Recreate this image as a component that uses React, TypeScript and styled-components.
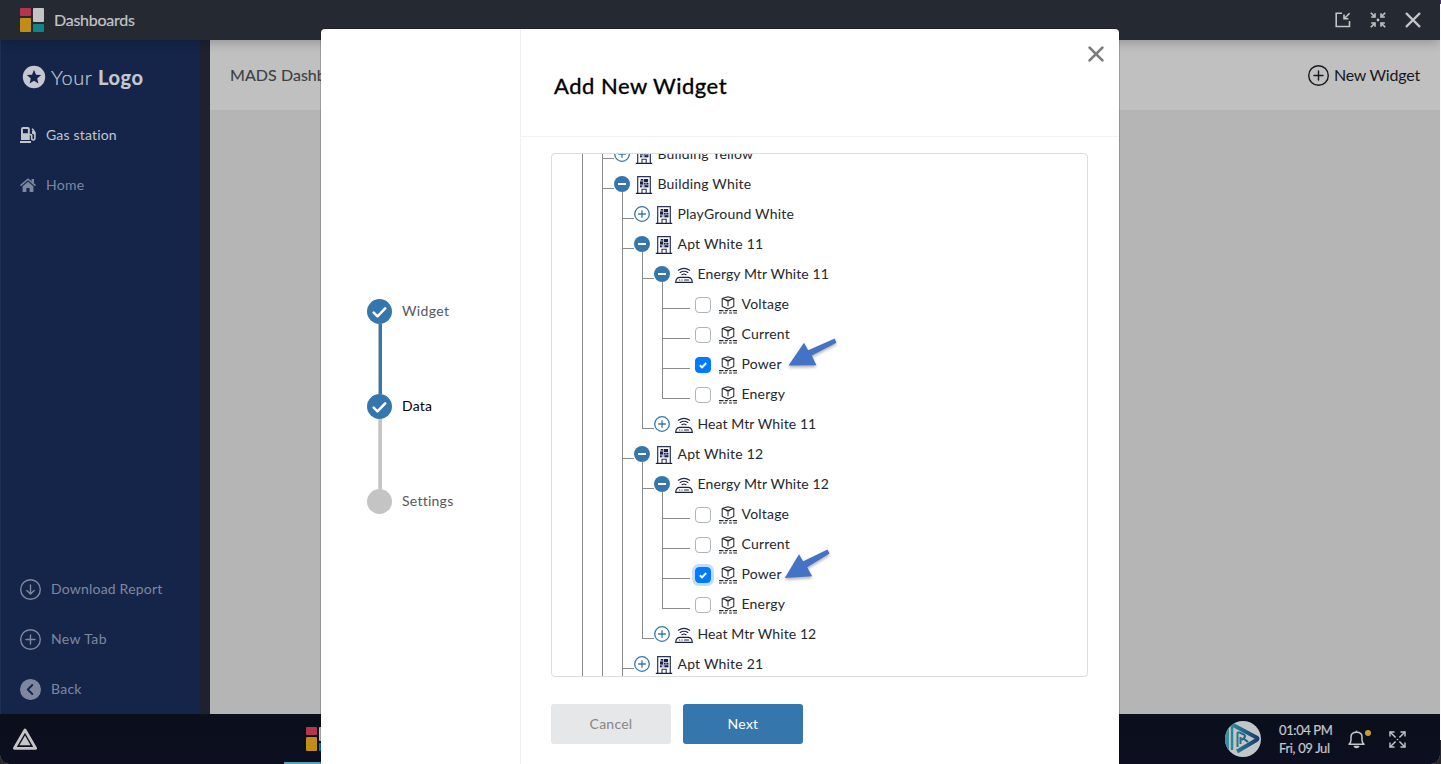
import React from "react";
import styled, { createGlobalStyle, css } from "styled-components";

const BLUE = "#3577ac";

const Global = createGlobalStyle`
  * { box-sizing: border-box; }
  html, body { margin: 0; padding: 0; background: #fdfdfd; overflow: hidden; }
  body { font-family: Lato, "Liberation Sans", sans-serif; font-size: 14px; }
  svg { display: block; flex: none; }
`;

const Label = styled.span<{ $ls?: number }>`
  display: block;
  padding-bottom: 2px;
  letter-spacing: ${(p) => p.$ls ?? 0.25}px;
  white-space: nowrap;
`;

/* ---------- desktop shell ---------- */

const Screen = styled.div`
  position: relative;
  width: 1441px;
  height: 764px;
  overflow: hidden;
  padding-right: 1px;
  background: linear-gradient(#5b2a86 4px, #fbfbfb 4px, #fbfbfb 740px, #2a2724 740px);
`;

const Desktop = styled.div`
  display: flex;
  flex-direction: column;
  height: 764px;
  border-radius: 0 0 9px 9px;
  overflow: hidden;
  background: #b5b5b5;
`;

const TopBar = styled.header`
  position: relative;
  display: flex;
  align-items: center;
  height: 40px;
  flex: none;
  padding: 0 19px 0 20px;
  background: #252932;
  color: #c3c4c6;
  font-size: 16px;
  box-shadow: 0 3px 10px rgba(0, 0, 0, 0.22);
  z-index: 1;
  svg + span { margin-left: 10px; }
`;

const AppName = styled(Label)`
  -webkit-text-stroke: 0.2px currentColor;
`;

const WindowControls = styled.div`
  display: flex;
  align-items: center;
  gap: 19px;
  margin-left: auto;
`;

const Main = styled.div`
  display: flex;
  flex: 1;
  min-height: 0;
`;

const Sidebar = styled.nav`
  display: flex;
  flex-direction: column;
  width: 210px;
  padding: 12px 0 0 20px;
  background: #15254a;
  border-right: 10px solid #1e2230;
  box-shadow: inset 1px 0 0 #1f2f54;
`;

const Brand = styled.div`
  display: flex;
  align-items: center;
  height: 50px;
  padding-left: 2px;
  color: #c5c8d0;
  font-size: 20px;
  font-weight: 300;
  b { font-weight: 700; }
`;

const BrandText = styled.span`
  margin-left: 5px;
  letter-spacing: 0.6px;
  white-space: nowrap;
  -webkit-text-stroke: 0.2px currentColor;
`;

const NavItem = styled.a<{ $active?: boolean }>`
  display: flex;
  align-items: center;
  height: 50px;
  gap: 10px;
  color: ${(p) => (p.$active ? "#c3c6cb" : "#7f879f")};
`;

const NavSpacer = styled.div`
  flex: 1;
`;

const NavTop = styled.div`
  margin-top: 8px;
`;

const Content = styled.section`
  flex: 1;
`;

const PageHeader = styled.div`
  display: flex;
  justify-content: space-between;
  align-items: center;
  height: 70px;
  padding: 0 20px;
  background: #c0c0c0;
  font-size: 16px;
  color: #3c4046;
`;

const PageTitle = styled(Label)`
  -webkit-text-stroke: 0.15px currentColor;
`;

const NewWidget = styled.div`
  display: flex;
  align-items: center;
  gap: 5px;
  color: #16181d;
`;

const TaskBar = styled.footer`
  display: flex;
  align-items: center;
  height: 50px;
  flex: none;
  padding: 0 34px 0 13px;
  background: linear-gradient(180deg, #0a0f1b, #0d0f20);
  color: #c6c7cb;
`;

const RunningApp = styled.div`
  display: flex;
  align-items: center;
  justify-content: center;
  width: 68px;
  height: 50px;
  margin-left: 247px;
  border-bottom: 2px solid #5b9dbd;
  padding-top: 2px;
`;

const Tray = styled.div`
  display: flex;
  align-items: center;
  margin-left: auto;
`;

const Clock = styled.div`
  display: flex;
  flex-direction: column;
  width: 69px;
  margin-left: 18px;
  padding-top: 2px;
  font-size: 13px;
  line-height: 16px;
  -webkit-text-stroke: 0.2px currentColor;
`;

const Bell = styled.div`
  position: relative;
  margin-right: 24px;
`;

const BellDot = styled.i`
  position: absolute;
  top: 0;
  right: -6px;
  width: 6px;
  height: 6px;
  border-radius: 50%;
  background: #cc9c2c;
`;

/* ---------- dialog ---------- */

const Dialog = styled.div`
  position: absolute;
  left: 321px;
  top: 29px;
  display: flex;
  width: 798px;
  height: 740px;
  border-radius: 4px;
  background: #fff;
  box-shadow: 0 0 0 1px rgba(0, 0, 0, 0.18);
  z-index: 2;
`;

const StepPanel = styled.aside`
  display: flex;
  flex-direction: column;
  width: 200px;
  padding: 270px 0 0 46px;
  border-right: 1px solid #f1f1f1;
`;

const Step = styled.div<{ $current?: boolean }>`
  display: flex;
  align-items: center;
  gap: 10px;
  height: 25px;
  color: ${(p) => (p.$current ? "#000" : "#54575e")};
`;

const StepDot = styled.span<{ $done?: boolean }>`
  display: flex;
  align-items: center;
  justify-content: center;
  width: 25px;
  height: 25px;
  border-radius: 50%;
  background: ${(p) => (p.$done ? BLUE : "#c4c4c4")};
`;

const StepLine = styled.div<{ $done?: boolean }>`
  width: 4px;
  height: 70px;
  margin-left: 11px;
  background: ${(p) => (p.$done ? BLUE : "#c4c4c4")};
  border-left: 1px solid ${(p) => (p.$done ? "#a9bccb" : "#d3d3d3")};
`;

const DialogBody = styled.div`
  display: flex;
  flex-direction: column;
  flex: 1;
`;

const DialogHeader = styled.div`
  display: flex;
  justify-content: space-between;
  height: 108px;
  padding: 0 15px 0 33px;
  border-bottom: 1px solid #f1f1f1;
`;

const DialogTitle = styled.h2`
  margin: 42px 0 0;
  font-size: 22px;
  line-height: 30px;
  font-weight: 400;
  color: #000;
  letter-spacing: 0.5px;
  -webkit-text-stroke: 0.35px #000;
`;

const CloseButton = styled.div`
  padding-top: 16.5px;
`;

const TreeBox = styled.div`
  width: 537px;
  height: 524px;
  margin: 16px 0 0 30px;
  border: 1px solid #dcdcdc;
  border-radius: 4px;
  overflow: hidden;
`;

const Tree = styled.div`
  display: flex;
  flex-direction: column;
  margin-top: -15px;
  padding-left: 30px;
  color: #24282e;
`;

const Row = styled.div`
  display: flex;
  align-items: center;
  height: 30px;
  flex: none;
`;

const Guide = styled.span<{ $branch?: boolean; $leaf?: boolean; $last?: boolean }>`
  position: relative;
  align-self: flex-start;
  width: ${(p) => (p.$leaf ? 28 : p.$branch ? 12 : 20)}px;
  height: ${(p) => (p.$last ? 20 : 30)}px;
  border-left: 1px solid #8b8b8b;
  ${(p) =>
    p.$branch &&
    css`
      &::after {
        content: "";
        position: absolute;
        top: 19px;
        left: 0;
        right: 0;
        height: 1px;
        background: #8b8b8b;
      }
    `}
`;

const Toggle = styled.span<{ $open?: boolean }>`
  position: relative;
  width: 16px;
  height: 16px;
  ${(p) =>
    p.$open &&
    css`
      &::after {
        content: "";
        position: absolute;
        left: 8px;
        top: 16px;
        width: 1px;
        height: 7px;
        background: #8b8b8b;
      }
    `}
`;

const NodeIcon = styled.span<{ $leaf?: boolean }>`
  display: flex;
  width: 18px;
  margin: ${(p) => (p.$leaf ? "2px 4.5px 0 8px" : "2px 4.5px 0 5px")};
`;

const CheckBox = styled.span<{ $on?: boolean; $focus?: boolean }>`
  display: flex;
  align-items: center;
  justify-content: center;
  width: 16px;
  height: 16px;
  margin: 2px 0 0 5px;
  border-radius: 4px;
  border: 1px solid ${(p) => (p.$on ? "#007bff" : "#adb5bd")};
  background: ${(p) => (p.$on ? "#007bff" : "#fff")};
  box-shadow: ${(p) => (p.$focus ? "0 0 0 3px #c5dcfb" : "none")};
`;

const Actions = styled.div`
  display: flex;
  gap: 12px;
  margin: 27px 0 0 30px;
`;

const Button = styled.button<{ $primary?: boolean }>`
  width: 120px;
  height: 40px;
  border: 0;
  border-radius: 3px;
  font: inherit;
  color: ${(p) => (p.$primary ? "#fff" : "#868686")};
  background: ${(p) => (p.$primary ? BLUE : "#e6e7e9")};
`;

const Pointer = styled.svg<{ $top: number }>`
  position: absolute;
  left: 780px;
  top: ${(p) => p.$top}px;
  z-index: 3;
  filter: drop-shadow(0 2px 1.5px rgba(0, 0, 0, 0.3));
`;

/* ---------- drawings ---------- */

const TilesIcon = () => (
  <svg width="24" height="24">
    <rect width="11" height="8" rx="1" fill="#b5364c" />
    <rect y="10" width="11" height="14" rx="1" fill="#c08e18" />
    <rect x="13" width="11" height="14" rx="1" fill="#c4c4c4" />
    <rect x="13" y="16" width="11" height="8" rx="1" fill="#108488" />
  </svg>
);

const PopInIcon = () => (
  <svg width="16" height="16" fill="none" stroke="#c3c4c6" strokeWidth="1.6">
    <path d="M7 1.200H1.200v13.300h13.300V9" />
    <path d="M14.600 1.200L9.600 6.200M9 2.600v4.200h4.400" />
  </svg>
);

const ShrinkIcon = () => (
  <svg width="16" height="16" fill="none" stroke="#c3c4c6" strokeWidth="1.6">
    <path d="M.8 .8l3.800 3.800M15.200 .8l-3.800 3.800M.8 15.200l3.800-3.800M15.200 15.200l-3.800-3.800" />
    <path d="M5 1.200V5H1.200M11 1.200V5h3.800M5 14.800V11H1.200M11 14.800V11h3.800" />
    <circle cx="8" cy="8" r="1.4" fill="#c3c4c6" stroke="none" />
  </svg>
);

const CrossIcon = ({ size, color, width }: { size: number; color: string; width: number }) => (
  <svg width={size} height={size} viewBox="0 0 16 16" fill="none" stroke={color} strokeWidth={width} strokeLinecap="round">
    <path d="M1.600 1.600l12.800 12.800M14.400 1.600L1.600 14.400" />
  </svg>
);

const StarBadge = () => (
  <svg width="24" height="24" viewBox="0 0 24 24">
    <circle cx="12" cy="12" r="11.2" fill="#c5c8d0" />
    <path d="M12 4.8l2 4.9 5.2.4-4 3.4 1.2 5.1-4.4-2.8-4.4 2.8 1.2-5.1-4-3.4 5.2-.4z" fill="#15254a" />
  </svg>
);

const PumpIcon = () => (
  <svg width="16" height="16" viewBox="0 0 16 16">
    <path fillRule="evenodd" d="M1 13V2Q1 0 3 0h4.800Q9.800 0 9.800 2v11zM2.900 1.900v4.300h5V1.900z" fill="#c3c6cb" />
    <rect y="14" width="11" height="2" fill="#c3c6cb" />
    <path d="M9.800 7.600h.9q1 0 1 1v3q0 1.400 1.500 1.400t1.700-1.500V5.600L12.200 1.600" fill="none" stroke="#c3c6cb" strokeWidth="1.600" />
    <path d="M12 3.500l2.800 1.800v2.800L12 6.400z" fill="#c3c6cb" />
  </svg>
);

const HomeIcon = () => (
  <svg width="16" height="14" viewBox="0 0 16 14">
    <path d="M.5 7.600L8 1.200l7.500 6.400" fill="none" stroke="#7f879f" strokeWidth="1.600" />
    <path d="M11.600 1H14v4.600l-2.400-2z" fill="#7f879f" />
    <path d="M2.600 8.200L8 3.700l5.400 4.500V14H9.600v-4H6.400v4H2.600z" fill="#7f879f" />
  </svg>
);

const CircleIcon = ({ kind, color }: { kind: "down" | "plus" | "back"; color: string }) => (
  <svg width="21" height="21" viewBox="0 0 21 21" fill="none" stroke={color} strokeWidth="1.4" strokeLinecap="round" strokeLinejoin="round">
    <circle cx="10.5" cy="10.5" r="9.8" fill={kind === "back" ? color : "none"} />
    {kind === "down" && <path d="M10.5 6v9M6.8 11.400l3.700 3.600 3.700-3.600" />}
    {kind === "plus" && <path d="M10.5 6v9M6 10.5h9" />}
    {kind === "back" && <path d="M12.300 6l-4.500 4.500 4.500 4.500" stroke="#15254a" strokeWidth="1.900" />}
  </svg>
);

const TriangleIcon = () => (
  <svg width="24" height="22" viewBox="0 0 24 22" strokeLinejoin="round">
    <path d="M12 2L22.600 20.300H1.400z" fill="none" stroke="#c5c5c5" strokeWidth="2.800" />
    <path d="M12 7.600l5.600 9.600H6.400z" fill="#c5c5c5" />
  </svg>
);

const Avatar = () => (
  <svg width="36" height="36" viewBox="0 0 36 36">
    <defs>
      <linearGradient id="avatarTint" x1="0" x2="36" gradientUnits="userSpaceOnUse">
        <stop offset="0.1" stopColor="#2d929b" />
        <stop offset="1" stopColor="#17336a" />
      </linearGradient>
      <clipPath id="avatarClip">
        <circle cx="18" cy="18" r="18" />
      </clipPath>
    </defs>
    <circle cx="18" cy="18" r="18" fill="#c3c6c8" />
    <g clipPath="url(#avatarClip)">
      <path d="M0 5h4v26H0z" fill="#3d8f9b" />
      <path d="M7 5.500Q7 3.600 9 4.500L31.500 16.500q2 1.300 0 2.600L12 30.500" fill="none" stroke="url(#avatarTint)" strokeWidth="4" strokeLinejoin="round" />
      <path d="M7 5v24" fill="none" stroke="url(#avatarTint)" strokeWidth="2.500" />
      <path d="M12.500 26V12.500q0-1.500 2-1l4.500 2q2 1.500 0 3.500l-2.500 2M18.500 17.500l4.500 3.500M15.500 16v7" fill="none" stroke="url(#avatarTint)" strokeWidth="2" />
    </g>
  </svg>
);

const BellIcon = () => (
  <svg width="17" height="19" viewBox="0 0 17 19" fill="none" stroke="#c6c7cb" strokeWidth="1.500" strokeLinejoin="round">
    <path d="M1 14.300q2-1.800 2-4.300V7q0-4.800 5.500-4.800T14 7v3q0 2.500 2 4.300z" />
    <path d="M8.500 2.200V.8" />
    <path d="M6.300 16.500q2.200 2.200 4.400 0z" fill="#c6c7cb" />
  </svg>
);

const ExpandIcon = () => (
  <svg width="17" height="17" viewBox="0 0 17 17" fill="none" stroke="#c6c7cb" strokeWidth="1.400">
    <path d="M1 5.500V1h4.500M11.500 1H16v4.500M16 11.500V16h-4.500M5.500 16H1v-4.500" />
    <path d="M1 1l5.600 5.600M16 1l-5.600 5.600M16 16l-5.600-5.600M1 16l5.600-5.600" />
    <circle cx="8.500" cy="8.500" r=".8" fill="#c6c7cb" stroke="none" />
  </svg>
);

const StepCheck = () => (
  <svg width="15" height="12" viewBox="0 0 15 12" fill="none" stroke="#fff" strokeWidth="2.500" strokeLinecap="round" strokeLinejoin="round">
    <path d="M1.700 6.600l3.800 3.800L13.200 2.400" />
  </svg>
);

const BoxCheck = () => (
  <svg width="8" height="7" viewBox="0 0 8 7" fill="none" stroke="#fff" strokeWidth="2">
    <path d="M.8 3.300l2.200 2.100L7.200 1" />
  </svg>
);

const ToggleIcon = ({ open }: { open?: boolean }) => (
  <svg width="16" height="16" viewBox="0 0 16 16">
    {open ? (
      <>
        <circle cx="8" cy="8" r="8" fill={BLUE} />
        <path d="M4 8h8" stroke="#fff" strokeWidth="2" />
      </>
    ) : (
      <g fill="none" stroke={BLUE} strokeWidth="1.300">
        <circle cx="8" cy="8" r="7.300" />
        <path d="M4.200 8h7.600M8 4.200v7.600" />
      </g>
    )}
  </svg>
);

const BuildingIcon = () => (
  <svg width="18" height="18" viewBox="0 0 18 18">
    <path d="M2.700 17V.7h12.600V17" fill="none" stroke="#2a3357" strokeWidth="1.200" />
    <path d="M.8 17.400h16.400" stroke="#16204a" strokeWidth="1.200" />
    <path d="M5 3h8.400v8.400H5z" fill="#b9bdca" />
    <path d="M5 5.500h3v3H5zM6 3h2v1.500H6zM9 3h4v3H9zM9 7h1.500v1.500H9zM11.500 7h1.900v1.500h-1.900zM5 9.400h1.800v1.800H5zM9.500 9.300h3.900v2H9.500z" fill="#16204a" />
    <path d="M7 17v-3.700h4.200V17" fill="none" stroke="#2a3357" strokeWidth="1.100" />
  </svg>
);

const MeterIcon = () => (
  <svg width="18" height="16" viewBox="0 0 18 16" fill="none" stroke="#1c2446" strokeWidth="1.150" strokeLinecap="round">
    <path d="M.7 15.300h16.600q-.3-4.400-3.600-4.900H4.300Q1 10.900 .7 15.300z" />
    <path d="M3.400 3.200Q9 -.3 14.600 3.200M5.200 5.500q3.800-2.500 7.600 0M7 7.700q2-1.400 4 0" />
    <path d="M4.600 13h.2M6.900 13h.2M9.500 13h4" />
  </svg>
);

const DatapointIcon = () => (
  <svg width="18" height="18" viewBox="0 0 18 18" fill="none" stroke="#26282c" strokeWidth="1.050" strokeLinejoin="round">
    <path d="M9 .7l5.800 1.900v8L9 12.900l-5.800-2.300v-8zM3.200 2.600L9 4.500l5.800-1.900" />
    <path d="M6.800 4.600h4.400M9 4.600v5.600" />
    <path d="M0 14.600h4.500M5.800 14.600h3M10.300 14.600h2.200M13.800 14.600H18M0 17h2.800M4 17h4M10 17h3M14.300 17H18" />
  </svg>
);

/* ---------- tree data ---------- */

type Kind = "building" | "meter" | "point";
interface TreeNode {
  text: string;
  kind: Kind;
  depth: number;
  open?: boolean;
  last?: boolean;
  checked?: boolean;
  focused?: boolean;
}

const nodes: TreeNode[] = [
  { text: "Building Yellow", kind: "building", depth: 2 },
  { text: "Building White", kind: "building", depth: 2, open: true },
  { text: "PlayGround White", kind: "building", depth: 3 },
  { text: "Apt White 11", kind: "building", depth: 3, open: true },
  { text: "Energy Mtr White 11", kind: "meter", depth: 4, open: true },
  { text: "Voltage", kind: "point", depth: 5 },
  { text: "Current", kind: "point", depth: 5 },
  { text: "Power", kind: "point", depth: 5, checked: true },
  { text: "Energy", kind: "point", depth: 5, last: true },
  { text: "Heat Mtr White 11", kind: "meter", depth: 4, last: true },
  { text: "Apt White 12", kind: "building", depth: 3, open: true },
  { text: "Energy Mtr White 12", kind: "meter", depth: 4, open: true },
  { text: "Voltage", kind: "point", depth: 5 },
  { text: "Current", kind: "point", depth: 5 },
  { text: "Power", kind: "point", depth: 5, checked: true, focused: true },
  { text: "Energy", kind: "point", depth: 5, last: true },
  { text: "Heat Mtr White 12", kind: "meter", depth: 4, last: true },
  { text: "Apt White 21", kind: "building", depth: 3 },
];

const kindIcon: Record<Kind, React.ReactElement> = {
  building: <BuildingIcon />,
  meter: <MeterIcon />,
  point: <DatapointIcon />,
};

const kindSpacing: Record<Kind, number> = { building: 0.2, meter: 0.1, point: 0.2 };

const TreeRow = ({ node }: { node: TreeNode }) => {
  const leaf = node.kind === "point";
  return (
    <Row>
      {Array.from({ length: node.depth - 1 }, (_, i) => (
        <Guide key={i} />
      ))}
      <Guide $branch $leaf={leaf} $last={node.last} />
      {leaf ? (
        <CheckBox $on={node.checked} $focus={node.focused}>
          {node.checked && <BoxCheck />}
        </CheckBox>
      ) : (
        <Toggle $open={node.open}>
          <ToggleIcon open={node.open} />
        </Toggle>
      )}
      <NodeIcon $leaf={leaf}>{kindIcon[node.kind]}</NodeIcon>
      <Label $ls={kindSpacing[node.kind]}>{node.text}</Label>
    </Row>
  );
};

export default function App() {
  return (
    <Screen>
      <Global />
      <Desktop>
        <TopBar>
          <TilesIcon />
          <AppName $ls={-0.25}>Dashboards</AppName>
          <WindowControls>
            <PopInIcon />
            <ShrinkIcon />
            <CrossIcon size={16} color="#c3c4c6" width={2.2} />
          </WindowControls>
        </TopBar>
        <Main>
          <Sidebar>
            <Brand>
              <StarBadge />
              <BrandText>
                Your <b>Logo</b>
              </BrandText>
            </Brand>
            <NavTop>
              <NavItem $active>
                <PumpIcon />
                <Label $ls={0.18}>Gas station</Label>
              </NavItem>
              <NavItem>
                <HomeIcon />
                <Label>Home</Label>
              </NavItem>
            </NavTop>
            <NavSpacer />
            <NavItem>
              <CircleIcon kind="down" color="#7f879f" />
              <Label $ls={0.2}>Download Report</Label>
            </NavItem>
            <NavItem>
              <CircleIcon kind="plus" color="#7f879f" />
              <Label $ls={0.4}>New Tab</Label>
            </NavItem>
            <NavItem>
              <CircleIcon kind="back" color="#7f879f" />
              <Label>Back</Label>
            </NavItem>
          </Sidebar>
          <Content>
            <PageHeader>
              <PageTitle $ls={0.05}>MADS Dashboard</PageTitle>
              <NewWidget>
                <CircleIcon kind="plus" color="#16181d" />
                <Label $ls={-0.2}>New Widget</Label>
              </NewWidget>
            </PageHeader>
          </Content>
        </Main>
        <TaskBar>
          <TriangleIcon />
          <RunningApp>
            <TilesIcon />
          </RunningApp>
          <Tray>
            <Avatar />
            <Clock>
              <Label $ls={-0.4}>01:04 PM</Label>
              <Label $ls={-0.35}>Fri, 09 Jul</Label>
            </Clock>
            <Bell>
              <BellIcon />
              <BellDot />
            </Bell>
            <ExpandIcon />
          </Tray>
        </TaskBar>
      </Desktop>

      <Dialog>
        <StepPanel>
          <Step>
            <StepDot $done>
              <StepCheck />
            </StepDot>
            <Label $ls={0.35}>Widget</Label>
          </Step>
          <StepLine $done />
          <Step $current>
            <StepDot $done>
              <StepCheck />
            </StepDot>
            <Label>Data</Label>
          </Step>
          <StepLine />
          <Step>
            <StepDot />
            <Label>Settings</Label>
          </Step>
        </StepPanel>
        <DialogBody>
          <DialogHeader>
            <DialogTitle>Add New Widget</DialogTitle>
            <CloseButton>
              <CrossIcon size={16} color="#7c7c7c" width={2.7} />
            </CloseButton>
          </DialogHeader>
          <TreeBox>
            <Tree>
              {nodes.map((n, i) => (
                <TreeRow key={i} node={n} />
              ))}
            </Tree>
          </TreeBox>
          <Actions>
            <Button>
              <Label>Cancel</Label>
            </Button>
            <Button $primary>
              <Label>Next</Label>
            </Button>
          </Actions>
        </DialogBody>
      </Dialog>

      <Pointer width="64" height="44" $top={334}>
        <path d="M8.500 31.600L24 8.700l4.200 7.600L54.800 4.400l1.600 4.400L31.800 21.500l4.600 9.800z" fill="#4472c4" />
      </Pointer>
      <Pointer width="64" height="44" $top={544}>
        <path d="M4.800 33.900L19 10.300l4.200 7L47.500 5.400l2 4.200L27.200 23.200l5 9z" fill="#4472c4" />
      </Pointer>
    </Screen>
  );
}
